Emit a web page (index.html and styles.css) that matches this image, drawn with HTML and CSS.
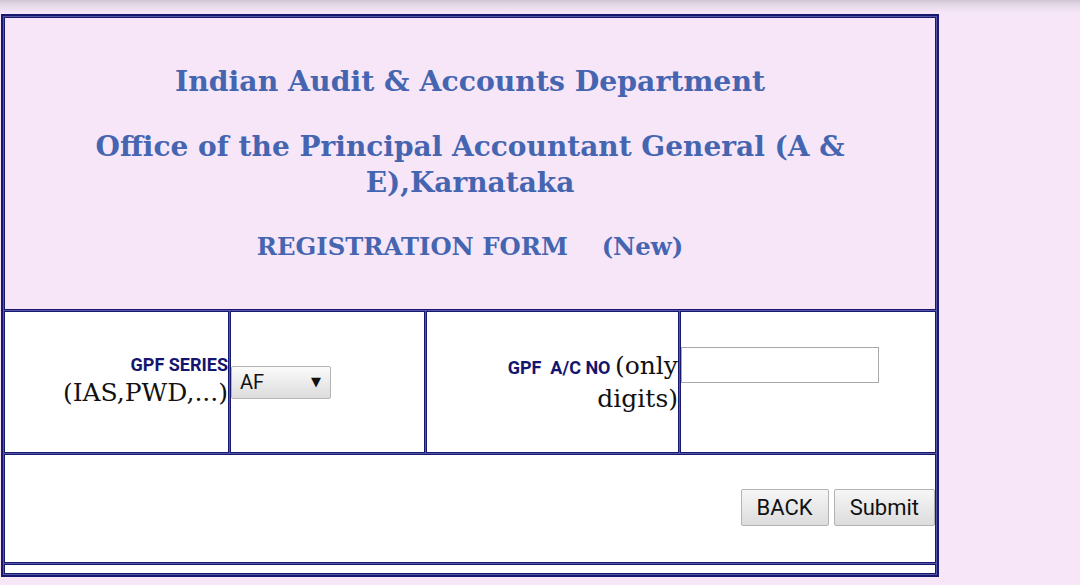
FILE: index.html
```html
<!DOCTYPE html>
<html>
<head>
<meta charset="utf-8">
<title>Registration Form</title>
<link rel="stylesheet" href="styles.css">
</head>
<body>
<form class="page">
<table class="reg">
  <colgroup>
    <col class="c1"><col class="c2"><col class="c3"><col class="c4">
  </colgroup>
  <tr>
    <td colspan="4" class="head">
      <div class="titles">
        <div class="t1">Indian Audit &amp; Accounts Department</div>
        <div class="t2">Office of the Principal Accountant General (A &amp; E),Karnataka</div>
        <div class="t3">REGISTRATION FORM &nbsp;&nbsp;&nbsp;(New)</div>
      </div>
    </td>
  </tr>
  <tr>
    <td class="label"><b class="lab">GPF SERIES</b> <span class="note">(IAS,PWD,...)</span></td>
    <td class="ctrl">
      <span class="sel"><select><option>AF</option><option>IAS</option><option>PWD</option></select><span class="arrow">▼</span></span>
    </td>
    <td class="label"><b class="lab">GPF&nbsp; A/C NO</b> <span class="note">(only</span> <span class="note">digits)</span></td>
    <td class="ctrl">
      <input type="text" class="acno">
      <div class="spacer">&nbsp;</div>
    </td>
  </tr>
  <tr>
    <td colspan="4" class="actions">
      <div class="btns">
        <button type="button" class="btn">BACK</button>
        <button type="submit" class="btn">Submit</button>
      </div>
    </td>
  </tr>
  <tr>
    <td colspan="4" class="foot"></td>
  </tr>
</table>
</form>
</body>
</html>
```
FILE: styles.css
```css
html, body {
  margin: 0;
  padding: 0;
}
body {
  background-color: #f6e6f8;
  background-image: linear-gradient(to bottom, #d2c8d4 0, #e7dbea 6px, #f6e6f8 13px);
  background-repeat: no-repeat;
  background-size: 100% 14px;
  font-family: "DejaVu Serif", serif;
  min-height: 585px;
}
.page {
  margin: 0;
  padding: 14px 0 0 1px;
}
.reg {
  width: 938px;
  border: 2px solid #18186f;
  border-spacing: 1px;
  table-layout: fixed;
  background: #5656a8;
}
.c1 { width: 225px; }
.c2 { width: 195px; }
.c3 { width: 253px; }
.c4 { width: 256px; }
.reg td {
  border: 1px solid #18186f;
  padding: 0;
  background: #ffffff;
}
.reg td.head {
  background: #f6e6f8;
  height: 291px;
  vertical-align: middle;
  text-align: center;
}
.titles {
  display: flex;
  flex-direction: column;
  gap: 29px;
  padding: 0 40px;
  color: #4565b0;
  font-weight: bold;
}
.t1 {
  font-size: 28.3px;
  line-height: 37px;
}
.t2 {
  font-size: 28px;
  line-height: 36px;
}
.t3 {
  font-size: 24.3px;
  line-height: 34px;
}
.reg td.label {
  height: 140px;
  text-align: right;
  vertical-align: middle;
  font-family: Roboto, sans-serif;
  font-size: 18px;
  line-height: 1.15;
}
.lab {
  color: #15156f;
  font-weight: 700;
}
.note {
  font-family: "DejaVu Serif", serif;
  font-size: 25px;
  line-height: 33px;
  color: #111111;
}
.reg td.ctrl {
  vertical-align: middle;
}
.sel {
  display: block;
  position: relative;
  width: 100px;
  height: 33px;
}
.sel select {
  appearance: none;
  -webkit-appearance: none;
  display: block;
  width: 100px;
  height: 33px;
  margin: 0;
  padding: 0 0 0 8px;
  border: 1px solid #b4b4b4;
  border-radius: 2px;
  background: linear-gradient(to bottom, #fbfbfb, #dcdcdc);
  font-family: Roboto, sans-serif;
  font-size: 20px;
  color: #111111;
}
.arrow {
  position: absolute;
  right: 10px;
  top: 8px;
  font-size: 13px;
  line-height: 16px;
  color: #111111;
  pointer-events: none;
  font-family: "DejaVu Sans", sans-serif;
}
.acno {
  display: block;
  box-sizing: border-box;
  width: 198px;
  height: 36px;
  margin: 0;
  padding: 0 4px;
  border: 1px solid #a9a9a9;
  border-radius: 0;
  background: #ffffff;
  font-family: Roboto, sans-serif;
  font-size: 18px;
}
.spacer {
  height: 35px;
  font-size: 10px;
}
.reg td.actions {
  height: 107px;
  vertical-align: middle;
}
.btns {
  display: flex;
  justify-content: flex-end;
  gap: 5px;
  margin-top: -2px;
}
.btn {
  box-sizing: border-box;
  height: 37px;
  margin: 0;
  padding: 0 15px;
  border: 1px solid #b3b3b3;
  border-radius: 2px;
  background: linear-gradient(to bottom, #f6f6f6, #dcdcdc);
  font-family: Roboto, sans-serif;
  font-size: 22px;
  color: #111111;
}
.reg td.foot {
  height: 8px;
}
```
